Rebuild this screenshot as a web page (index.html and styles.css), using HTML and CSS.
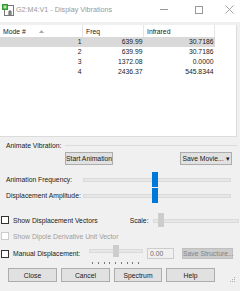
FILE: index.html
```html
<!DOCTYPE html>
<html lang="en">
<head>
    <meta charset="UTF-8">
    <title>Display Vibrations</title>
    <link rel="stylesheet" href="styles.css">
</head>
<body>
    <div class="window">
        <div class="titlebar">
            <svg class="app-icon" width="12" height="12" viewBox="0 0 12 12">
                <rect x="2.5" y="1.5" width="9" height="10" fill="#fff" stroke="#777"/>
                <rect x="0" y="0" width="6" height="6" fill="#2f9e2f"/>
                <rect x="1.5" y="1.5" width="3" height="3" fill="#b8e6a8"/>
                <path d="M6 8h4M6 10h4M8 6v5" stroke="#555" stroke-width="1"/>
            </svg>
            <span class="title">G2:M4:V1 - Display Vibrations</span>
            <span class="ctl ctl-min"></span>
            <span class="ctl ctl-max"></span>
            <svg class="ctl-close" width="9" height="9" viewBox="0 0 9 9">
                <path d="M0.5 0.5L8.5 8.5M8.5 0.5L0.5 8.5" stroke="#999" stroke-width="0.9"/>
            </svg>
        </div>

        <div class="list">
            <table class="modes">
                <thead>
                    <tr>
                        <th class="c-mode">Mode #
                            <svg class="sort" width="5" height="3" viewBox="0 0 5 3"><path d="M0 3L2.5 0L5 3Z" fill="#a8a8a8"/></svg>
                        </th>
                        <th class="c-freq">Freq</th>
                        <th class="c-ir">Infrared</th>
                        <th class="c-fill"></th>
                    </tr>
                </thead>
                <tbody>
                    <tr class="selected"><td>1</td><td>639.99</td><td>30.7186</td><td class="blank"></td></tr>
                    <tr><td>2</td><td>639.99</td><td>30.7186</td><td class="blank"></td></tr>
                    <tr><td>3</td><td>1372.08</td><td>0.0000</td><td class="blank"></td></tr>
                    <tr><td>4</td><td>2436.37</td><td>545.8344</td><td class="blank"></td></tr>
                </tbody>
            </table>
        </div>

        <div class="group-head"><span>Animate Vibration:</span></div>
        <div class="btn-row">
            <button class="btn btn-start">Start Animation</button>
            <button class="btn btn-movie">Save Movie... &#9662;</button>
        </div>

        <div class="slider-row first">
            <span class="slider-label">Animation Frequency:</span>
            <div class="slider wide"><span class="thumb"></span></div>
        </div>
        <div class="slider-row">
            <span class="slider-label">Displacement Amplitude:</span>
            <div class="slider wide"><span class="thumb"></span></div>
        </div>

        <div class="check-row vectors">
            <span class="box"></span>
            <span class="check-label">Show Displacement Vectors</span>
            <span class="scale-label">Scale:</span>
            <div class="slider scale"><span class="thumb off"></span></div>
        </div>
        <div class="check-row dipole">
            <span class="box disabled"></span>
            <span class="check-label disabled-text">Show Dipole Derivative Unit Vector</span>
        </div>

        <div class="manual-row">
            <span class="box"></span>
            <span class="manual-label">Manual Displacement:</span>
            <div class="slider manual">
                <span class="thumb off"></span>
                <div class="ticks">
                    <i></i><i></i><i></i><i></i><i></i><i></i><i></i><i></i><i></i>
                </div>
            </div>
            <span class="textbox">0.00</span>
            <button class="btn btn-save" disabled>Save Structure...</button>
        </div>

        <div class="bottom-row">
            <button class="btn btn-bottom">Close</button>
            <button class="btn btn-bottom">Cancel</button>
            <button class="btn btn-bottom narrow">Spectrum</button>
            <button class="btn btn-bottom">Help</button>
            <svg class="grip" width="7" height="7" viewBox="0 0 7 7">
                <rect x="5" y="1" width="1" height="1" fill="#aaa"/>
                <rect x="3" y="3" width="1" height="1" fill="#aaa"/>
                <rect x="5" y="3" width="1" height="1" fill="#aaa"/>
                <rect x="1" y="5" width="1" height="1" fill="#aaa"/>
                <rect x="3" y="5" width="1" height="1" fill="#aaa"/>
                <rect x="5" y="5" width="1" height="1" fill="#aaa"/>
            </svg>
        </div>
    </div>
</body>
</html>
```

FILE: styles.css
```css
body {
    margin: 0;
    font-family: "Liberation Sans", Arial, sans-serif;
    font-size: 6.8px;
    color: #1a1a1a;
    background-color: #f0f0f0;
}
.window {
    width: 240px;
    height: 291px;
    overflow: hidden;
    background-color: #f0f0f0;
}
.titlebar {
    height: 22px;
    background-color: #fff;
    display: flex;
    align-items: center;
}
.app-icon {
    margin-left: 2px;
    margin-top: -3px;
}
.title {
    flex: 1;
    margin-left: 2px;
    margin-top: -3px;
    font-size: 7.2px;
    color: #999;
}
.ctl {
    display: block;
    box-sizing: border-box;
    margin-top: -3px;
}
.ctl-min {
    width: 8px;
    height: 1px;
    background-color: #999;
    margin-right: 27px;
}
.ctl-max {
    width: 8px;
    height: 8px;
    border: 1px solid #999;
    margin-right: 22px;
}
.ctl-close {
    margin-top: -3px;
    margin-right: 6px;
}

.list {
    margin-top: 3px;
    width: 237px;
    height: 112px;
    background-color: #fff;
    border-right: 1px solid #dcdcdc;
    border-bottom: 1px solid #dcdcdc;
    box-sizing: border-box;
}
.modes {
    border-collapse: collapse;
    table-layout: fixed;
    width: 236px;
}
.modes th {
    height: 12px;
    padding: 0 0 0 3px;
    text-align: left;
    font-weight: normal;
    border-right: 1px solid #e5e5e5;
    white-space: nowrap;
}
.modes th.c-mode { width: 79px; }
.modes th.c-freq { width: 57px; }
.modes th.c-ir { width: 67px; }
.modes th.c-fill { border-right: none; }
.sort {
    margin-left: 11px;
    vertical-align: 1px;
}
.modes td {
    height: 10px;
    padding: 0 1px 0 0;
    text-align: right;
    line-height: 10px;
}
.modes tr.selected td {
    background-color: #d9d9d9;
}
.modes tr.selected td.blank {
    background-color: #fff;
}

.group-head {
    margin-top: 3px;
    height: 11px;
    padding-left: 6px;
    display: flex;
    align-items: center;
}
.group-head::after {
    content: "";
    flex: 1;
    height: 1px;
    margin-left: 4px;
    margin-right: 3px;
    background-color: #dcdcdc;
}
.btn-row {
    margin-top: 1px;
    height: 13px;
    display: flex;
    padding-left: 65px;
}
.btn {
    box-sizing: border-box;
    height: 13px;
    padding: 0;
    font-family: inherit;
    font-size: 6.8px;
    color: #1a1a1a;
    background-color: #e1e1e1;
    border: 1px solid #adadad;
    white-space: nowrap;
}
.btn-start { width: 48px; }
.btn-movie {
    width: 52px;
    margin-left: auto;
    margin-right: 8px;
}

.slider-row {
    margin-top: 1px;
    height: 15px;
    display: flex;
    align-items: center;
}
.slider-row.first { margin-top: 7px; }
.slider-label {
    width: 77px;
    padding-left: 6px;
    white-space: nowrap;
}
.slider {
    position: relative;
    height: 15px;
}
.slider::before {
    content: "";
    position: absolute;
    left: 0;
    right: 0;
    top: 6px;
    height: 2px;
    background-color: #e7e7e7;
    border: 0.5px solid #dadada;
}
.slider.wide { width: 148px; }
.thumb {
    position: absolute;
    top: 0;
    left: 69px;
    width: 6px;
    height: 15px;
    background-color: #0078d7;
}
.thumb.off { background-color: #cdcdcd; }

.check-row {
    height: 14px;
    display: flex;
    align-items: center;
}
.vectors { margin-top: 10px; }
.dipole { margin-top: 2px; }
.box {
    display: block;
    box-sizing: border-box;
    width: 8px;
    height: 8px;
    margin-left: 1px;
    border: 1px solid #333;
    background-color: #fff;
}
.box.disabled { border-color: #cccccc; }
.check-label {
    margin-left: 4px;
    white-space: nowrap;
}
.disabled-text { color: #9d9d9d; }
.scale-label { margin-left: 32px; }
.slider.scale {
    width: 86px;
    height: 14px;
    margin-left: 4px;
}
.slider.scale .thumb {
    left: 5px;
    height: 14px;
}

.manual-row {
    margin-top: 1px;
    height: 20px;
    display: flex;
    align-items: flex-start;
}
.manual-row .box { margin-top: 6px; }
.manual-label {
    width: 76px;
    margin-left: 4px;
    line-height: 20px;
    white-space: nowrap;
}
.slider.manual {
    width: 54px;
    height: 20px;
}
.slider.manual::before { top: 5px; }
.slider.manual .thumb {
    top: 1px;
    left: 24px;
    height: 12px;
}
.ticks {
    position: absolute;
    left: 3px;
    right: 4px;
    top: 18px;
    display: flex;
    justify-content: space-between;
}
.ticks i {
    width: 1px;
    height: 2px;
    background-color: #777;
}
.textbox {
    box-sizing: border-box;
    width: 27px;
    height: 11px;
    margin-top: 4px;
    margin-left: 4px;
    padding-left: 2px;
    line-height: 9px;
    color: #6d6d6d;
    background-color: #f0f0f0;
    border: 1px solid #cccccc;
}
.btn-save {
    width: 51px;
    height: 11px;
    margin-top: 4px;
    margin-left: 8px;
    color: #838383;
    background-color: #cccccc;
    border-color: #bfbfbf;
}

.bottom-row {
    margin-top: 4px;
    height: 14px;
    display: flex;
    gap: 4px;
    padding-left: 8px;
}
.btn-bottom {
    width: 49px;
    height: 14px;
}
.btn-bottom.narrow { width: 48px; }
.grip {
    margin-left: auto;
    margin-right: 4px;
    margin-top: 8px;
}
```
